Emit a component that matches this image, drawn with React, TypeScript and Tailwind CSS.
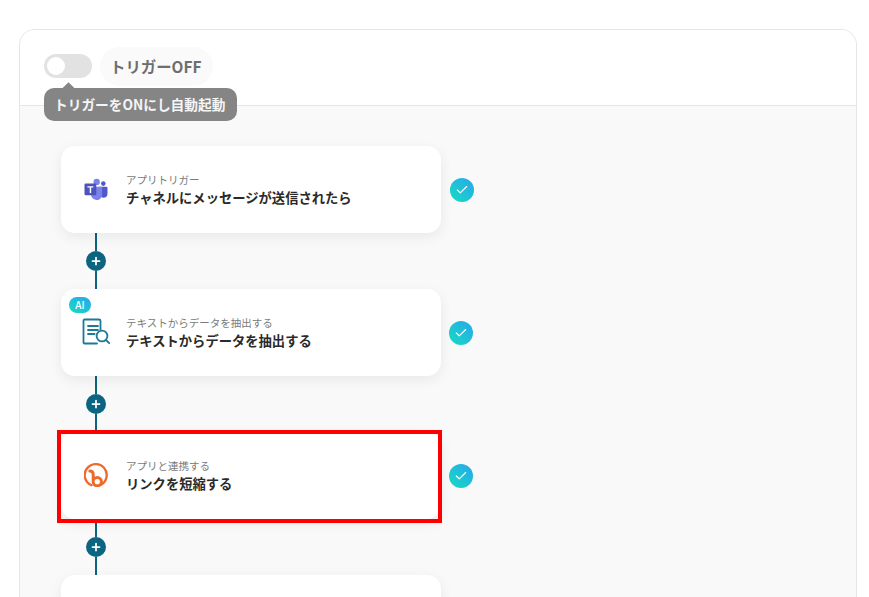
import React from 'react';
import { Check, Plus } from 'lucide-react';

const font = "font-['Noto_Sans_CJK_JP','Noto_Sans',sans-serif]";

function TeamsIcon() {
  return (
    <svg width="24" height="24" viewBox="0 0 24 24">
      <circle cx="19.3" cy="6.6" r="2.3" fill="#5059c9" />
      <path d="M15 9.8h7.6c.6 0 .9.4.9.9v6c0 2.400-1.800 4-4 4-1.600 0-3-.8-3.700-2.100z" fill="#5059c9" />
      <circle cx="12.700" cy="4.900" r="3.200" fill="#7b83eb" />
      <path d="M7.500 9.800h9.600c.6 0 1 .4 1 1v6.600c0 3.200-2.500 5.600-5.500 5.600-2.800 0-5.100-2-5.500-4.700z" fill="#7b83eb" />
      <rect x="0.500" y="6.500" width="11.800" height="11.800" rx="1.200" fill="#4b53bc" />
      <path d="M9.400 9.300H3.400v1.300h2.300v5.500h1.500v-5.500h2.200z" fill="#fff" />
    </svg>
  );
}

function ExtractIcon() {
  return (
    <svg width="28" height="28" viewBox="0 0 28 28" fill="none" stroke="#1b7a95" strokeWidth="1.800" strokeLinecap="round" strokeLinejoin="round">
      <path d="M15 25.500H2.500a1 1 0 0 1-1-1V2.500a1 1 0 0 1 1-1h14.500a1.500 1.500 0 0 1 1.500 1.500v8.500" />
      <path d="M6 8h10M6 12h10M6 16h6.500" />
      <circle cx="20" cy="18" r="5.400" />
      <path d="M24 22l3.200 3.200" />
    </svg>
  );
}

function BitlyIcon() {
  return (
    <svg width="24" height="24" viewBox="0 0 24 24" fill="none" stroke="#ee6a2c" strokeLinecap="round">
      <path d="M7.500 22.300A11 11 0 1 1 17 21.800" strokeWidth="2.300" />
      <path d="M5.800 8c2.200 0 3.400 1.300 3.400 3.500v7.200a4.100 4.100 0 1 0 4.100-4.100c-1.700 0-3 .8-3.800 2" strokeWidth="3" />
    </svg>
  );
}

function Connector() {
  return (
    <div className="flex h-[56px] w-[380px] flex-col items-center pr-[310px]">
      <div className="w-[2px] flex-1 bg-[#0b6480]" />
      <div className="flex h-[20px] w-[20px] shrink-0 items-center justify-center rounded-full bg-[#0b6480]">
        <Plus size={12} strokeWidth={3.500} className="text-white" />
      </div>
      <div className="w-[2px] flex-1 bg-[#0b6480]" />
    </div>
  );
}

function StepCard({
  icon,
  label,
  title,
  ai,
  highlight,
  checkClass,
}: {
  icon: React.ReactNode;
  label: string;
  title: string;
  ai?: boolean;
  highlight?: boolean;
  checkClass?: string;
}) {
  return (
    <div className="flex items-center">
      <div className="relative flex h-[87px] w-[380px] items-center rounded-[14px] bg-white shadow-[0_4px_14px_rgba(0,0,0,0.07)]">
        {ai && (
          <div className="absolute left-[8px] top-[8px] flex h-[16px] w-[22px] items-center justify-center rounded-full bg-linear-to-tr from-[#19dcc0] to-[#2aa5ea] text-[10px] leading-none font-medium text-white">
            AI
          </div>
        )}
        {highlight && (
          <div className="absolute -left-[4px] -right-[1px] -top-[2px] -bottom-[4px] border-4 border-[#ff0000]" />
        )}
        <div className="flex w-[65px] shrink-0 items-center justify-center pb-[1px] pl-[5px]">{icon}</div>
        <div className="flex flex-col">
          <span className="text-[10.500px] leading-[15px] text-[#7a7a7a]">{label}</span>
          <span className="mt-[1px] text-[13.300px] leading-[20px] font-bold text-[#2a2a2a]">{title}</span>
        </div>
      </div>
      <div
        className={`flex h-[24px] w-[24px] items-center justify-center rounded-full bg-linear-to-tr from-[#19dcc0] to-[#2aa5ea] ${checkClass ?? 'ml-[8px]'}`}
      >
        <Check size={14} strokeWidth={2} className="text-white" />
      </div>
    </div>
  );
}

export default function App() {
  return (
    <div className={`h-[597px] w-[869px] overflow-hidden bg-white pl-[19px] pr-[12px] pt-[29px] ${font}`}>
      <div className="h-[600px] overflow-hidden rounded-t-[16px] border border-b-0 border-[#e6e6e6]">
        <div className="relative flex h-[76px] items-start gap-[8px] border-b border-[#e6e6e6] bg-white pl-[24px] pt-[17px]">
          <div className="mt-[7px] flex h-[24px] w-[48px] items-center rounded-full bg-[#e2e2e2] pl-[3px]">
            <div className="h-[18px] w-[18px] rounded-full bg-white" />
          </div>
          <div className="flex h-[39px] items-center rounded-full bg-[#fafafa] pl-[10px] pr-[12px] text-[15.400px] font-bold text-[#6e6e6e]">
            トリガーOFF
          </div>
          <div className="absolute left-[24px] top-[58px] z-10 flex h-[33px] items-center rounded-[10px] bg-[#858585] pl-[10px] pr-[12px] text-[13.700px] font-bold whitespace-nowrap text-[#f5f5f5]">
            <div className="absolute -top-[4px] left-[20px] h-[9px] w-[9px] rotate-45 bg-[#858585]" />
            トリガーをONにし自動起動
          </div>
        </div>
        <div className="h-[520px] bg-[#f9f9f9] pl-[41px] pt-[40px]">
          <StepCard
            icon={<TeamsIcon />}
            label="アプリトリガー"
            title="チャネルにメッセージが送信されたら"
            checkClass="ml-[9px]"
          />
          <Connector />
          <StepCard
            icon={<ExtractIcon />}
            label="テキストからデータを抽出する"
            title="テキストからデータを抽出する"
            ai
          />
          <Connector />
          <StepCard icon={<BitlyIcon />} label="アプリと連携する" title="リンクを短縮する" highlight />
          <Connector />
          <div className="h-[87px] w-[380px] rounded-[14px] bg-white shadow-[0_4px_14px_rgba(0,0,0,0.07)]" />
        </div>
      </div>
    </div>
  );
}
